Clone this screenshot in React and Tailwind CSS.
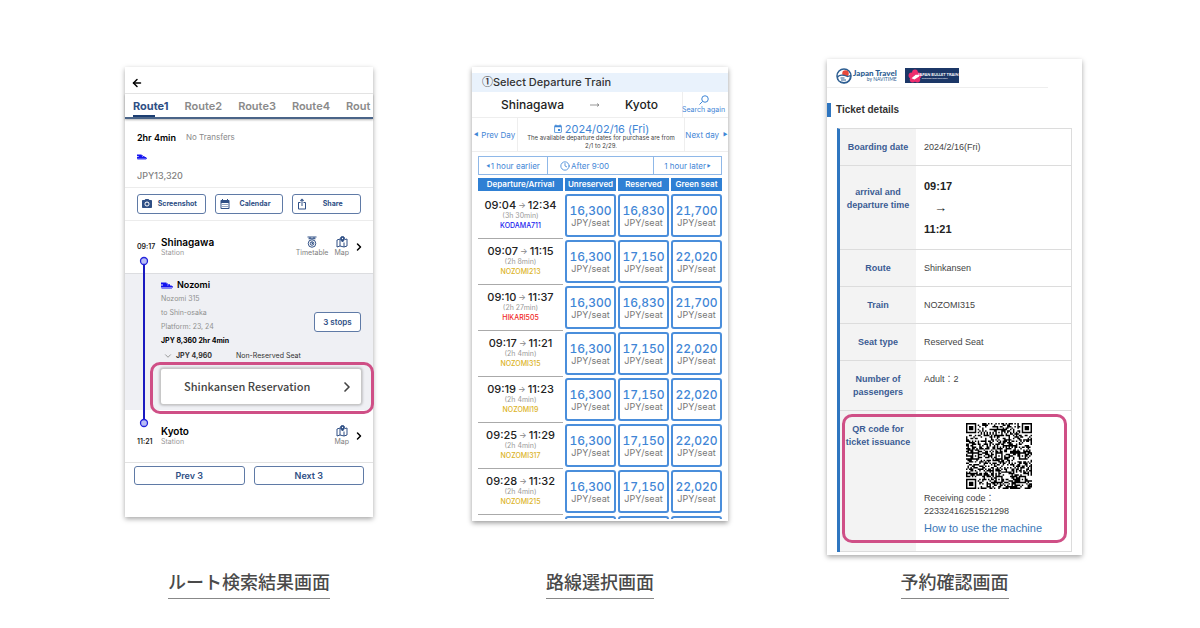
import React from "react";
import { MdPhotoCamera, MdCalendarMonth, MdIosShare, MdEvent } from "react-icons/md";
import { ArrowLeft, ChevronRight, ChevronDown, Clock } from "lucide-react";

function TrainIcon({ className }) {
  return (
    <svg viewBox="0 0 24 12" className={className} fill="#1414f0" aria-hidden="true">
      <path d="M0 0h11v2h3v1.500h4V6h3.500v1.500H24V10H0V6h4V4H0z" />
      <path d="M1 11h21v1H1z" />
      <path d="M12 4.500h3v1.200h-3z" fill="#ffffff" />
    </svg>
  );
}

function MapIcon() {
  return (
    <svg viewBox="0 0 24 24" className="size-3" fill="none" stroke="#2f4f85" strokeWidth="2" aria-hidden="true">
      <path d="M8 6 2 8v14l6-2 8 2 6-2V6l-4 1M8 6v14M16 13v9" />
      <path d="M13 1a4 4 0 0 1 4 4c0 3-4 7-4 7S9 8 9 5a4 4 0 0 1 4-4z" fill="#2f4f85" />
      <circle cx="13" cy="5" r="1.300" fill="#ffffff" stroke="none" />
    </svg>
  );
}

function TimetableIcon() {
  return (
    <svg viewBox="0 0 24 24" className="size-3" fill="none" stroke="#2f4f85" strokeWidth="2" aria-hidden="true">
      <path d="M3 2h18M5 5.500h14M8 2v4M16 2v4" />
      <circle cx="12" cy="15" r="7.500" />
      <circle cx="12" cy="15" r="3.500" />
      <path d="M12 12v3h2" />
    </svg>
  );
}

function IconLink({ icon, label }) {
  return (
    <a href="#" className="flex flex-col items-center text-[7px] leading-[10px] text-[#808080]">
      {icon}
      {label}
    </a>
  );
}

function StationRow({ time, name, timetable, timeClass }) {
  return (
    <div className="flex h-[52px] items-center pr-2">
      <time className={"w-9 pl-3 text-[7px] font-semibold leading-[10px] text-[#222] " + timeClass}>{time}</time>
      <div className="flex-1">
        <p className="text-[10px] font-semibold leading-3 text-black">{name}</p>
        <p className="text-[7px] leading-[10px] text-[#999]">Station</p>
      </div>
      <div className="flex gap-[6px]">
        {timetable && <IconLink icon={<TimetableIcon />} label="Timetable" />}
        <IconLink icon={<MapIcon />} label="Map" />
      </div>
      <ChevronRight className="ml-1 size-3 text-black" strokeWidth={3} />
    </div>
  );
}

function ActionButton({ icon, label }) {
  return (
    <button className="flex h-5 flex-1 items-center rounded-[3px] border border-[#5f7aa6] bg-white px-[3px] text-[7px] font-bold text-[#2f4f85]">
      {icon}
      <span className="flex-1 text-center">{label}</span>
    </button>
  );
}

function RouteCard() {
  return (
    <div className="mt-2 bg-white pb-8 font-[Inter,sans-serif] shadow-[0_2px_5px_rgba(0,0,0,0.35)]">
      <header className="flex h-[27px] items-center border-b border-[#e8e8e8] pl-[6px] pt-[6px]">
        <button aria-label="Back">
          <ArrowLeft className="size-3 text-black" strokeWidth={3} />
        </button>
      </header>
      <nav className="flex h-[25px] gap-4 overflow-hidden border-b-2 border-[#4a6488] pl-2 text-[11px] font-semibold leading-6 text-[#8a8a8a] shadow-[0_1px_2px_rgba(0,0,0,0.3)]">
        <a href="#" className="relative font-bold text-[#2f4f85]">
          Route1
          <span className="absolute bottom-0 left-0 h-[2px] w-[22px] bg-[#1d3f73]" />
        </a>
        <a href="#">Route2</a>
        <a href="#">Route3</a>
        <a href="#">Route4</a>
        <a href="#">Rout</a>
      </nav>
      <section className="border-b border-[#ececec] px-3 pb-[2px] pt-[9px] leading-[19px]">
        <p className="flex gap-[10px] text-[9px]">
          <strong className="font-semibold text-black">2hr 4min</strong>
          <span className="text-[8px] text-[#8a8a8a]">No Transfers</span>
        </p>
        <div className="flex h-[19px] items-center">
          <TrainIcon className="h-[6px] w-[10px]" />
        </div>
        <p className="text-[9px] font-medium text-[#808080]">JPY13,320</p>
      </section>
      <div className="flex gap-[9px] border-b border-[#ececec] px-3 py-[6px]">
        <ActionButton icon={<MdPhotoCamera className="size-3" />} label="Screenshot" />
        <ActionButton icon={<MdCalendarMonth className="size-3" />} label="Calendar" />
        <ActionButton icon={<MdIosShare className="size-3" />} label="Share" />
      </div>
      <div className="relative border-b border-[#e2e2e2]">
        <StationRow time="09:17" name="Shinagawa" timetable timeClass="" />
        <section className="border-t border-[#dcdde0] bg-[#eff0f4] pb-[5px] pl-9 pr-3 pt-1">
          <div className="flex items-end justify-between">
            <div className="text-[7px] leading-[14px] text-[#909090]">
              <p className="flex items-center gap-1 text-[9px] font-semibold leading-[14px] text-black">
                <TrainIcon className="h-[7px] w-3" />
                Nozomi
              </p>
              <p>Nozomi 315</p>
              <p>to Shin-osaka</p>
              <p>Platform: 23, 24</p>
              <p className="font-bold text-black">JPY 8,360 2hr 4min</p>
            </div>
            <button className="mb-4 h-5 w-[47px] rounded-[3px] border border-[#5f7aa6] bg-white text-[8px] font-semibold text-[#2f4f85]">
              3 stops
            </button>
          </div>
          <p className="flex h-[15px] items-center text-[7px] leading-[15px] text-[#333]">
            <ChevronDown className="ml-[2px] mr-[3px] size-[10px] text-[#888]" />
            <strong className="mr-6 font-bold">JPY 4,960</strong>
            Non-Reserved Seat
          </p>
          <div className="relative -mx-px mt-[5px]">
            <button className="flex h-[37px] w-full items-center rounded-[3px] border border-[#c8c8c8] bg-white pl-[23px] pr-[6px] font-['Noto_Sans_CJK_JP',sans-serif] text-[11px] font-medium text-[#444] shadow-[0_0_3px_rgba(0,0,0,0.35)]">
              <span className="flex-1 text-left">Shinkansen Reservation</span>
              <ChevronRight className="size-4" strokeWidth={2.5} />
            </button>
            <span className="pointer-events-none absolute -bottom-[9px] -left-[10px] -right-3 -top-[6px] rounded-[10px] border-3 border-[#cf4f86]" />
          </div>
        </section>
        <StationRow time="11:21" name="Kyoto" timeClass="pt-3" />
        <svg className="absolute left-[14px] top-[35px] h-[172px] w-[10px]" viewBox="0 0 10 172" aria-hidden="true">
          <path d="M5 5V167" stroke="#1a1ac0" strokeWidth="2" />
          <circle cx="5" cy="5" r="3.500" fill="#b9bdf5" stroke="#2424dc" strokeWidth="1.300" />
          <circle cx="5" cy="167" r="3.500" fill="#b9bdf5" stroke="#2424dc" strokeWidth="1.300" />
        </svg>
      </div>
      <div className="flex gap-[9px] px-[9px] pt-[3px] text-[9px] font-semibold text-[#2f4f85]">
        <button className="h-[19px] flex-1 rounded-[3px] border border-[#5f7aa6]">Prev 3</button>
        <button className="h-[19px] flex-1 rounded-[3px] border border-[#5f7aa6]">Next 3</button>
      </div>
    </div>
  );
}

const TRAINS = [
  { dep: "09:04", arr: "12:34", time: "3h 30min", name: "KODAMA711", color: "text-[#2222ee]", prices: ["16,300", "16,830", "21,700"] },
  { dep: "09:07", arr: "11:15", time: "2h 8min", name: "NOZOMI213", color: "text-[#dcb428]", prices: ["16,300", "17,150", "22,020"] },
  { dep: "09:10", arr: "11:37", time: "2h 27min", name: "HIKARI505", color: "text-[#f02828]", prices: ["16,300", "16,830", "21,700"] },
  { dep: "09:17", arr: "11:21", time: "2h 4min", name: "NOZOMI315", color: "text-[#dcb428]", prices: ["16,300", "17,150", "22,020"] },
  { dep: "09:19", arr: "11:23", time: "2h 4min", name: "NOZOMI19", color: "text-[#dcb428]", prices: ["16,300", "17,150", "22,020"] },
  { dep: "09:25", arr: "11:29", time: "2h 4min", name: "NOZOMI317", color: "text-[#dcb428]", prices: ["16,300", "17,150", "22,020"] },
  { dep: "09:28", arr: "11:32", time: "2h 4min", name: "NOZOMI215", color: "text-[#dcb428]", prices: ["16,300", "17,150", "22,020"] },
];

function TrainCard() {
  return (
    <div className="mt-2 bg-white pb-[2px] pt-[6px] font-[Inter,'Noto_Sans_CJK_JP',sans-serif] text-[#3f86d6] shadow-[0_2px_5px_rgba(0,0,0,0.4)]">
      <h2 className="h-[19px] bg-[#e9f2fc] pl-[10px] text-[11px] font-medium leading-[19px] text-[#333]">
        <span className="font-['Noto_Sans_CJK_JP',sans-serif] leading-none">①</span>Select Departure Train
      </h2>
      <div className="flex h-[26px] border-b border-[#eee]">
        <div className="flex flex-1 items-center justify-between border-r border-[#eee] pl-[29px] pr-6 text-[12px] font-medium text-[#222]">
          <span>Shinagawa</span>
          <svg viewBox="0 0 20 8" className="h-1 w-[10px]" fill="none" stroke="#777" strokeWidth="1.500" aria-hidden="true">
            <path d="M0 4h18M14 1l4 3-4 3" />
          </svg>
          <span>Kyoto</span>
        </div>
        <a href="#" className="flex w-[45px] flex-col items-center pr-1 pt-[3px] text-[7px] leading-[9px]">
          <svg viewBox="0 0 20 20" className="h-[10px] w-[10px]" fill="none" stroke="currentColor" strokeWidth="2" aria-hidden="true">
            <circle cx="12" cy="8" r="6.500" />
            <path d="M7 13l-6 6" />
          </svg>
          <span className="whitespace-nowrap">Search again</span>
        </a>
      </div>
      <div className="flex h-[34px] items-stretch whitespace-nowrap border-b border-[#eee] text-[8px]">
        <button className="flex w-[46px] items-center justify-center gap-[3px] border-r border-[#eee]">
          <span className="text-[5px]">◀</span>Prev Day
        </button>
        <div className="flex-1 pt-[6px] text-center">
          <p className="flex items-center justify-center gap-[2px] text-[11px] leading-[10px]">
            <MdEvent className="size-[10px]" />
            2024/02/16 (Fri)
          </p>
          <p className="text-[6px] leading-[8px] text-[#444]">
            The available departure dates for purchase are from
            <br />
            2/1 to 2/29.
          </p>
        </div>
        <button className="flex w-[44px] items-center justify-center gap-1 border-l border-[#eee]">
          Next day<span className="text-[5px]">▶</span>
        </button>
      </div>
      <div className="mx-[6px] mt-1 flex h-[19px] border border-[#8fb8e8] text-[8px]">
        <button className="flex w-[68px] items-center justify-center gap-px whitespace-nowrap">
          <span className="text-[4px]">◀</span>1 hour earlier
        </button>
        <button className="flex flex-1 items-center gap-px border-x border-[#8fb8e8] pl-3">
          <Clock className="size-[10px]" />
          After 9:00
        </button>
        <button className="flex w-[67px] items-center justify-center gap-px whitespace-nowrap">
          1 hour later<span className="text-[4px]">▶</span>
        </button>
      </div>
      <div className="mx-1 mt-[3px] h-[341px] overflow-hidden">
        <table className="w-full table-fixed border-separate border-spacing-x-[2px] border-spacing-y-0 text-center">
          <colgroup>
            <col className="w-[85px]" />
            <col />
            <col />
            <col />
          </colgroup>
          <thead>
            <tr className="text-[8px] leading-[13px] text-white">
              {["Departure/Arrival", "Unreserved", "Reserved", "Green seat"].map((h) => (
                <th key={h} className="whitespace-nowrap bg-[#2f80d4] p-0 font-semibold">
                  {h}
                </th>
              ))}
            </tr>
          </thead>
          <tbody>
            <tr>
              <td colSpan={4} className="h-[2px] p-0" />
            </tr>
            {TRAINS.map((t) => (
              <tr key={t.dep}>
                <td className="border-b border-[#aaa] p-0 pt-[6px] align-top">
                  <p className="flex items-center justify-center gap-[2px] text-[11px] font-medium leading-3 text-[#222]">
                    {t.dep}
                    <span className="text-[8px] text-[#888]">→</span>
                    {t.arr}
                  </p>
                  <p className="text-[7px] leading-[10px] text-[#999]">({t.time})</p>
                  <p className={"text-[7px] font-medium leading-[10px] " + t.color}>{t.name}</p>
                </td>
                {t.prices.map((p, i) => (
                  <td key={i} className="p-0 pb-[2px] pt-px">
                    <button className="block h-[43px] w-full rounded-[3px] border-2 border-[#4a8edb] bg-white">
                      <span className="block text-[12px] font-medium leading-[13px] tabular-nums">{p}</span>
                      <span className="block text-[9px] leading-[11px] text-[#777]">JPY/seat</span>
                    </button>
                  </td>
                ))}
              </tr>
            ))}
            <tr>
              <td />
              {[0, 1, 2].map((i) => (
                <td key={i} className="p-0 pt-px">
                  <div className="h-[43px] rounded-[3px] border-2 border-[#4a8edb]" />
                </td>
              ))}
            </tr>
          </tbody>
        </table>
      </div>
    </div>
  );
}

const QR_SIZE = 45;

// Builds a version 7 grid: finder, alignment and timing patterns over filled data modules.
function qrPath() {
  let seed = 20240216;
  const random = () => {
    seed = (seed * 1103515245 + 12345) % 2147483648;
    return seed / 2147483648;
  };
  const ring = (dx, dy, radii) => radii.includes(Math.max(Math.abs(dx), Math.abs(dy)));
  const finders = [[3, 3], [41, 3], [3, 41]];
  const aligns = [[22, 6], [6, 22], [22, 22], [38, 22], [22, 38], [38, 38]];
  let d = "";
  for (let y = 0; y < QR_SIZE; y++) {
    for (let x = 0; x < QR_SIZE; x++) {
      let on = random() < 0.5;
      if (x === 6) on = y % 2 === 0;
      if (y === 6) on = x % 2 === 0;
      for (const [cx, cy] of aligns) {
        if (Math.abs(x - cx) <= 2 && Math.abs(y - cy) <= 2) on = ring(x - cx, y - cy, [0, 2]);
      }
      for (const [cx, cy] of finders) {
        if (Math.abs(x - cx) <= 4 && Math.abs(y - cy) <= 4) on = ring(x - cx, y - cy, [0, 1, 3]);
      }
      if (on) d += `M${x} ${y}h1v1h-1z`;
    }
  }
  return d;
}

function Detail({ label, children }) {
  return (
    <tr>
      <th className="border-b border-[#dcdcdc] bg-[#f3f3f3] p-0 pb-[11px] pt-3 text-center align-top font-bold text-[#3b5c94]">{label}</th>
      <td className="border-b border-[#dcdcdc] p-0 pl-2 pt-3 align-top">{children}</td>
    </tr>
  );
}

function TicketCard() {
  return (
    <div className="bg-white pb-[3px] font-['Liberation_Sans','Noto_Sans_CJK_JP',sans-serif] text-[#444] shadow-[0_2px_5px_rgba(0,0,0,0.35)]">
      <header className="mr-[34px] flex h-[29px] items-center gap-2 border-b border-[#eee] pl-[9px] pt-[5px]">
        <div className="flex items-center gap-px">
          <svg viewBox="0 0 32 32" className="size-4" aria-hidden="true">
            <circle cx="16" cy="16" r="14" fill="#fff" stroke="#2c5d91" strokeWidth="3" />
            <circle cx="19" cy="11" r="6.500" fill="#e8483a" />
            <path d="M3 18c5-6 12-4 20-1l6-2c0 9-6 14-13 14S3 25 3 18z" fill="#fff" stroke="#2c5d91" strokeWidth="2.500" />
            <path d="M9 20h8M10 24h10" stroke="#2c5d91" strokeWidth="2" />
          </svg>
          <div className="text-right font-[Lato,sans-serif] text-[#2c5d91]">
            <p className="text-[8px] font-black leading-[8px]">Japan Travel</p>
            <p className="text-[5px] leading-[5px]">by NAVITIME</p>
          </div>
        </div>
        <div className="flex h-[15px] w-[54px] items-center bg-[#1c3767] pl-[3px] text-white">
          <svg viewBox="0 0 24 24" className="size-[14px] shrink-0" aria-hidden="true">
            <g fill="#ee2d6e">
              <circle cx="12" cy="6" r="5" />
              <circle cx="18" cy="11" r="5" />
              <circle cx="16" cy="18" r="5" />
              <circle cx="8" cy="18" r="5" />
              <circle cx="6" cy="11" r="5" />
            </g>
            <path d="M6 16l7-6h6v3l-8 5z" fill="#fff" />
          </svg>
          <div className="-ml-1 whitespace-nowrap font-[Lato,sans-serif] font-bold">
            <p className="text-[4px] leading-[5px]">JAPAN BULLET TRAIN</p>
            <p className="pl-1 text-[2px] font-normal leading-[3px]">Shinkansen ticket reservation</p>
          </div>
        </div>
      </header>
      <h2 className="mt-[15px] border-l-4 border-[#2f76c0] pl-[5px] text-[10px] font-bold leading-[14px] text-[#333]">Ticket details</h2>
      <div className="pl-[10px] pr-[10px] pt-[11px]">
        <table className="w-full border-separate border-spacing-0 border-l-3 border-r border-t border-l-[#2f76c0] border-r-[#dcdcdc] border-t-[#dcdcdc] text-[9px] leading-[13px]">
          <colgroup>
            <col className="w-[76px]" />
            <col />
          </colgroup>
          <tbody>
            <Detail label="Boarding date">2024/2/16(Fri)</Detail>
            <tr>
              <th className="border-b border-[#dcdcdc] bg-[#f3f3f3] p-0 pt-5 text-center align-top font-bold text-[#3b5c94]">
                arrival and
                <br />
                departure time
              </th>
              <td className="border-b border-[#dcdcdc] p-0 pb-[9px] pl-2 pt-[10px] align-top text-[11px] font-bold leading-[21px] text-[#222]">
                <p>09:17</p>
                <p className="h-[22px] pl-[10px] text-[13px] font-normal">→</p>
                <p>11:21</p>
              </td>
            </tr>
            <Detail label="Route">Shinkansen</Detail>
            <Detail label="Train">NOZOMI315</Detail>
            <Detail label="Seat type">Reserved Seat</Detail>
            <Detail label={<>Number of<br />passengers</>}>Adult：2</Detail>
            <tr>
              <th className="whitespace-nowrap border-b border-[#dcdcdc] bg-[#f3f3f3] p-0 pt-3 text-center align-top font-bold text-[#3b5c94]">
                QR code for
                <br />
                ticket issuance
              </th>
              <td className="relative border-b border-[#dcdcdc] p-0 pb-4 pl-2 pt-3 align-top">
                <svg viewBox="0 0 45 45" className="ml-[42px] block size-[66px]" role="img" aria-label="QR code">
                  <path d={qrPath()} fill="#000" />
                </svg>
                <p className="mt-[3px]">Receiving code：</p>
                <p>22332416251521298</p>
                <a href="#" className="mt-1 block text-[11px] text-[#3a78b8]">
                  How to use the machine
                </a>
                <span className="pointer-events-none absolute -left-[74px] bottom-2 right-1 top-[3px] rounded-[10px] border-3 border-[#cf4f86]" />
              </td>
            </tr>
          </tbody>
        </table>
      </div>
    </div>
  );
}

function Screen({ caption, children }) {
  return (
    <figure className="flex flex-col">
      {children}
      <figcaption className="mt-auto self-center border-b border-[#888] pb-1 font-['Noto_Sans_CJK_JP',sans-serif] text-[18px] font-medium leading-[26px] text-[#4a4a4a]">
        {caption}
      </figcaption>
    </figure>
  );
}

export default function App() {
  return (
    <main className="min-h-screen bg-white pb-7 pl-[7px] pt-[59px]">
      <div className="grid min-h-[540px] grid-cols-[248px_256px_255px] justify-center gap-x-[99px]">
        <Screen caption="ルート検索結果画面">
          <RouteCard />
        </Screen>
        <Screen caption="路線選択画面">
          <TrainCard />
        </Screen>
        <Screen caption="予約確認画面">
          <TicketCard />
        </Screen>
      </div>
    </main>
  );
}
